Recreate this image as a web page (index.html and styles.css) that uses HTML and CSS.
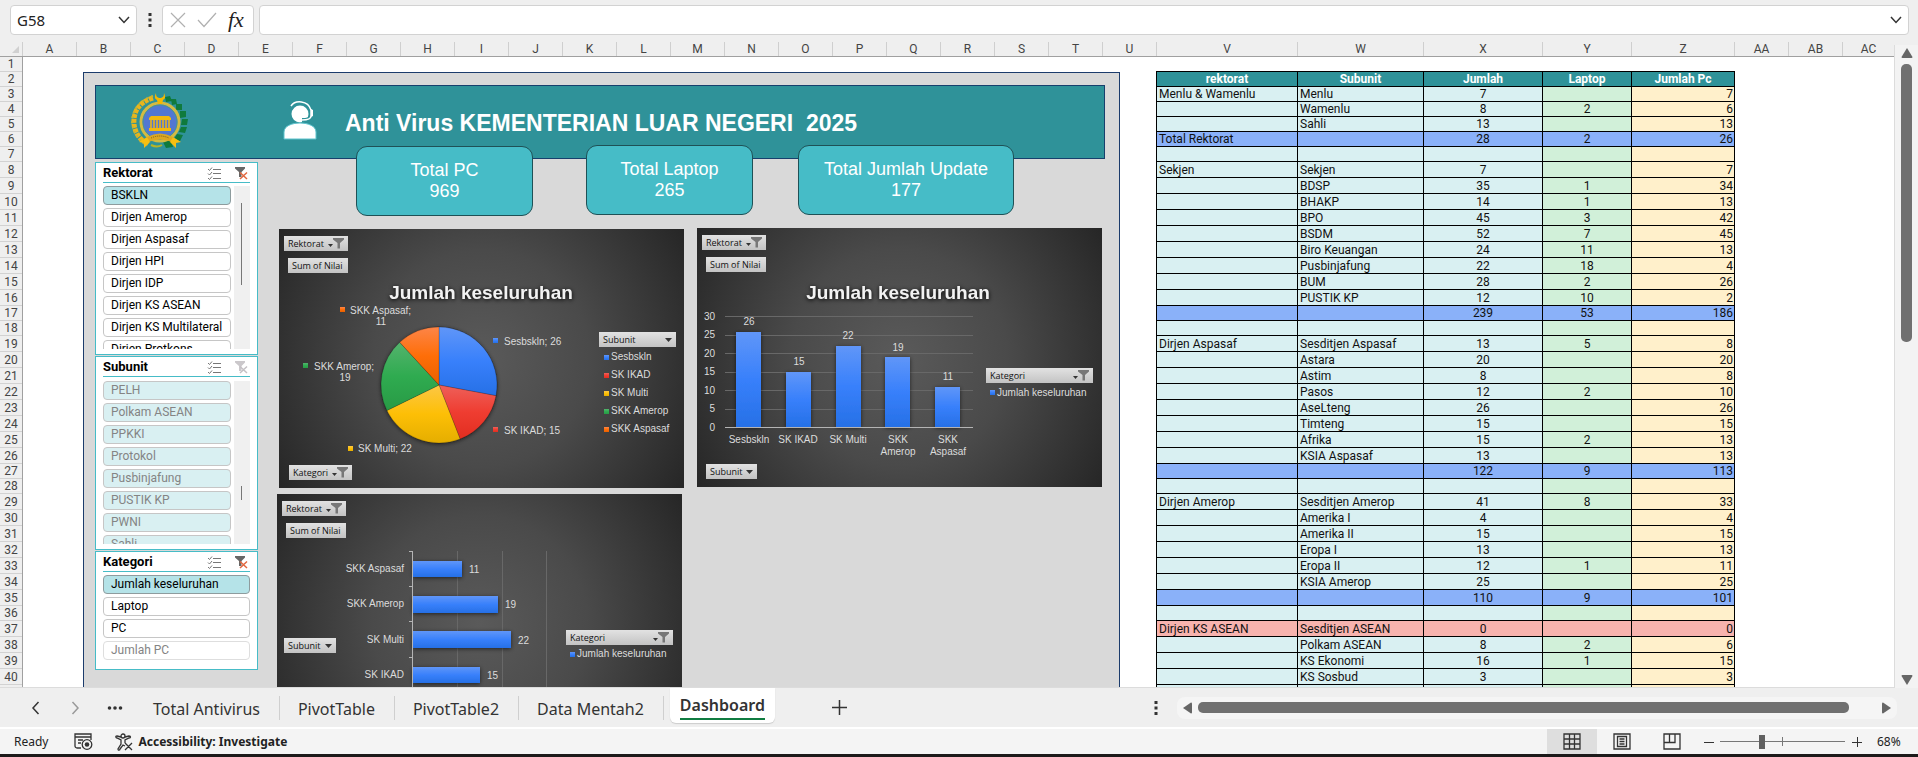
FILE: index.html
```
<!DOCTYPE html>
<html lang="id">
<head>
<meta charset="utf-8">
<title>Dashboard</title>
<link rel="stylesheet" href="styles.css">
</head>
<body>
<svg class="defs" width="0" height="0" aria-hidden="true">
  <defs>
    <linearGradient id="blue" x1="0" y1="0" x2="0" y2="1"><stop offset="0" stop-color="#6096f8"/><stop offset=".5" stop-color="#3880fb"/><stop offset="1" stop-color="#2670e6"/></linearGradient>
    <linearGradient id="red" x1="0" y1="0" x2="0" y2="1"><stop offset="0" stop-color="#ee605a"/><stop offset=".5" stop-color="#ef3d31"/><stop offset="1" stop-color="#e22e20"/></linearGradient>
    <linearGradient id="yellow" x1="0" y1="0" x2="0" y2="1"><stop offset="0" stop-color="#fcc746"/><stop offset=".5" stop-color="#fdbf06"/><stop offset="1" stop-color="#e5ae00"/></linearGradient>
    <linearGradient id="green" x1="0" y1="0" x2="0" y2="1"><stop offset="0" stop-color="#54b36d"/><stop offset=".5" stop-color="#2fab50"/><stop offset="1" stop-color="#289a45"/></linearGradient>
    <linearGradient id="orange" x1="0" y1="0" x2="0" y2="1"><stop offset="0" stop-color="#fd8548"/><stop offset=".5" stop-color="#fe6e08"/><stop offset="1" stop-color="#e86000"/></linearGradient>
    <filter id="shade" x="-20%" y="-20%" width="140%" height="140%"><feDropShadow dx="0" dy="1" stdDeviation="2" flood-color="#000" flood-opacity=".6"/></filter>
    <symbol id="funnel" viewBox="0 0 16 11"><path d="M0 6h5l-2.500 3z" fill="#333"/><path d="M5 0h11v1.500L12 5v5.500H9.500V5L5 1.500z" fill="#777"/></symbol>
    <symbol id="multi" viewBox="0 0 14 13"><path d="M1 2l1.500 1.500L5 .5M1 6.500L2.500 8 5 5M1 11l1.500 1.500L5 9.500" fill="none" stroke="#777"/><path d="M6 2.500h8M6 6.500h8M6 11.500h8" stroke="#777"/></symbol>
    <symbol id="clear" viewBox="0 0 14 13"><path d="M1 0h10v1.500L7.500 5v5H5V5L1 1.500z" fill="#666"/><path d="M6 5.500l7 6.500M13 5.500L6 12" stroke="#e2673f" stroke-width="1.500"/></symbol>
    <symbol id="clear-off" viewBox="0 0 14 13"><path d="M1 0h10v1.500L7.500 5v5H5V5L1 1.500z" fill="#cbc8cb"/><path d="M6 5.500l7 6.500M13 5.500L6 12" stroke="#c4c0c4" stroke-width="1.500"/></symbol>
  </defs>
</svg>

<header class="formula-bar">
  <div class="name-box">
    <input type="text" value="G58" aria-label="Name Box">
    <button type="button" aria-label="Open names"><svg width="12" height="8" viewBox="0 0 12 8"><path d="M1 1l5 5.500L11 1" fill="none" stroke="#333" stroke-width="1.500"/></svg></button>
  </div>
  <svg class="grip" width="4" height="14" viewBox="0 0 4 14"><path d="M.5 0h3v3h-3zM.5 5.500h3v3h-3zM.5 11h3v3h-3z" fill="#333"/></svg>
  <div class="fx-box">
    <button type="button" aria-label="Cancel"><svg width="16" height="16" viewBox="0 0 16 16"><path d="M1 1l14 14M15 1L1 15" stroke="#b0b0b0" stroke-width="1.200"/></svg></button>
    <button type="button" aria-label="Enter"><svg width="20" height="16" viewBox="0 0 20 16"><path d="M1 8l6 6.500L19 1" fill="none" stroke="#b0b0b0" stroke-width="1.200"/></svg></button>
    <button type="button" class="fx">fx</button>
  </div>
  <div class="formula">
    <input type="text" aria-label="Formula">
    <button type="button" aria-label="Expand formula bar"><svg width="12" height="8" viewBox="0 0 12 8"><path d="M1 1l5 5.500L11 1" fill="none" stroke="#333" stroke-width="1.500"/></svg></button>
  </div>
</header>

<main class="workbook">
  <section class="sheet">
    <div class="columns">
      <span class="corner"><svg width="7" height="7" viewBox="0 0 7 7"><path d="M7 0v7H0z" fill="#d0d0d0"/></svg></span>
      <span>A</span><span>B</span><span>C</span><span>D</span><span>E</span><span>F</span><span>G</span><span>H</span><span>I</span><span>J</span><span>K</span><span>L</span><span>M</span><span>N</span><span>O</span><span>P</span><span>Q</span><span>R</span><span>S</span><span>T</span><span>U</span>
      <span class="col-v">V</span><span class="col-w">W</span><span class="col-x">X</span><span class="col-y">Y</span><span class="col-z">Z</span><span>AA</span><span>AB</span><span class="last">AC</span>
    </div>
    <div class="grid">
      <div class="rows">
        <span class="s">1</span><span class="s">2</span><span class="s">3</span><span class="s">4</span><span class="s">5</span><span class="s">6</span><span class="s">7</span><span>8</span><span>9</span><span>10</span><span>11</span><span>12</span><span>13</span><span>14</span><span>15</span><span>16</span><span class="s">17</span><span class="s">18</span><span>19</span><span>20</span><span>21</span><span>22</span><span>23</span><span>24</span><span>25</span><span>26</span><span class="s">27</span><span class="s">28</span><span>29</span><span>30</span><span>31</span><span>32</span><span>33</span><span>34</span><span>35</span><span class="s">36</span><span>37</span><span>38</span><span>39</span><span>40</span><span></span>
      </div>
      <div class="canvas">
        <section class="dashboard">
          <div class="banner">
            <svg class="emblem" width="58" height="58" viewBox="0 0 58 58">
              <path d="M22 7C8 11 2 21 3 33c1 9 6 16 14 20" fill="none" stroke="#e9b51c" stroke-width="5" stroke-dasharray="4 1"/>
              <path d="M22 5C9 9 1 19 1 31c1 10 6 18 15 23" fill="none" stroke="#c3b536" stroke-width="2" stroke-dasharray="2 3"/>
              <g fill="#0f7a3c"><path d="M34 6l5-1 2 5-6 1zM40 8l5 0 1 5-5 1zM45 13l6 0 0 6-6 0zM49 20l6 0 0 6-6 1zM51 28l6 0-1 6-6 0zM50 36l6 0-2 6-6-1zM46 43l6 1-3 6-6-2zM32 51l8-2 2 7-7 1z"/></g>
              <circle cx="29" cy="31" r="19" fill="#5277d2" stroke="#d3bb42" stroke-width="3"/>
              <circle cx="29" cy="31" r="17" fill="none" stroke="#48998a"/>
              <path d="M18 27l2-2h18l2 2v2H18zM18 37h22v3H18z" fill="#f2b90f"/>
              <path d="M20 29v8M23 29v8M26 29v8M29 29v8M32 29v8M35 29v8M38 29v8" stroke="#f2b90f" stroke-width="1.500"/>
              <path d="M25 2c0 5 2 4 3 5h2c1-1 3 0 3-5 2 4 1 6-1 7l-1 4h-4l-1-4c-2-1-3-3-1-7z" fill="#f5b800"/>
              <path d="M16 46q13-7 26 0l-1 5q-12-5-24 0z" fill="#dca722"/><path d="M16 46l-8 5 5 1 0 5 6-6zM42 46l8 5-5 1 0 5-6-6z" fill="#f7bf11"/>
              <path d="M20 47q9-4 18 0" fill="none" stroke="#79601b" stroke-dasharray="1 1"/>
              <path d="M20 54q6 3 11 0" fill="none" stroke="#b7b527" stroke-width="2"/>
            </svg>
            <svg class="agent" width="34" height="40" viewBox="0 0 34 40">
              <circle cx="17" cy="13" r="8.500" fill="#fff"/>
              <path d="M1 38v-7c0-6 8-9 16-9s16 3 16 9v7z" fill="#fff" stroke="#5cc3cd"/>
              <path d="M8 8C10 0 25-2 28 9v6c0 3-4 4-9 4" fill="none" stroke="#2f9299" stroke-width="4"/>
              <path d="M8 5C12-1 25-1 28 9v6c0 3-4 4-9 4" fill="none" stroke="#fff" stroke-width="1.500"/><path d="M28 8l2 1v6l-2 1z" fill="#fff"/>
            </svg>
            <h1>Anti Virus KEMENTERIAN LUAR NEGERI &nbsp;2025</h1>
          </div>

          <div class="card card-pc"><span>Total PC</span><span>969</span></div>
          <div class="card card-laptop"><span>Total Laptop</span><span>265</span></div>
          <div class="card card-update"><span>Total Jumlah Update</span><span>177</span></div>

          <div class="slicers">
            <section class="slicer rektorat">
              <header><h2>Rektorat</h2><button type="button" aria-label="Multi-Select"><svg width="14" height="13"><use href="#multi"/></svg></button><button type="button" aria-label="Clear Filter"><svg width="14" height="13"><use href="#clear"/></svg></button></header>
              <div class="slicer-body">
                <div class="items"><button type="button" class="on">BSKLN</button><button type="button">Dirjen Amerop</button><button type="button">Dirjen Aspasaf</button><button type="button">Dirjen HPI</button><button type="button">Dirjen IDP</button><button type="button">Dirjen KS ASEAN</button><button type="button">Dirjen KS Multilateral</button><button type="button">Dirjen Protkons</button></div>
                <div class="track"><i></i></div>
              </div>
            </section>
            <section class="slicer subunit">
              <header><h2>Subunit</h2><button type="button" aria-label="Multi-Select"><svg width="14" height="13"><use href="#multi"/></svg></button><button type="button" aria-label="Clear Filter"><svg width="14" height="13"><use href="#clear-off"/></svg></button></header>
              <div class="slicer-body">
                <div class="items"><button type="button">PELH</button><button type="button">Polkam ASEAN</button><button type="button">PPKKI</button><button type="button">Protokol</button><button type="button">Pusbinjafung</button><button type="button">PUSTIK KP</button><button type="button">PWNI</button><button type="button">Sahli</button></div>
                <div class="track"><i></i></div>
              </div>
            </section>
            <section class="slicer kategori">
              <header><h2>Kategori</h2><button type="button" aria-label="Multi-Select"><svg width="14" height="13"><use href="#multi"/></svg></button><button type="button" aria-label="Clear Filter"><svg width="14" height="13"><use href="#clear"/></svg></button></header>
              <div class="slicer-body">
                <div class="items"><button type="button" class="on">Jumlah keseluruhan</button><button type="button">Laptop</button><button type="button">PC</button><button type="button" class="off">Jumlah PC</button></div>
              </div>
            </section>
          </div>

          <section class="chart pie">
            <svg width="405" height="259" viewBox="0 0 405 259">
              <text class="title" x="202" y="70">Jumlah keseluruhan</text>
              <g stroke="#00000040" stroke-width=".7">
                <circle cx="160" cy="156" r="58" fill="#444" filter="url(#shade)"/>
                <path d="M160 156V98A58 58 0 0 1 217 166.700z" fill="url(#blue)"/>
                <path d="M160 156L217 166.700A58 58 0 0 1 181.100 210z" fill="url(#red)"/>
                <path d="M160 156L181.100 210A58 58 0 0 1 107.900 181.500z" fill="url(#yellow)"/>
                <path d="M160 156L107.900 181.500A58 58 0 0 1 120.700 113.300z" fill="url(#green)"/>
                <path d="M160 156L120.700 113.300A58 58 0 0 1 160 98z" fill="url(#orange)"/>
              </g>
              <rect x="61" y="78" width="5" height="5" fill="url(#orange)"/><text x="71" y="85">SKK Aspasaf;</text><text class="mid" x="102" y="96">11</text>
              <rect x="214" y="109" width="5" height="5" fill="url(#blue)"/><text x="225" y="116">Sesbskln; 26</text>
              <rect x="214" y="198" width="5" height="5" fill="url(#red)"/><text x="225" y="205">SK IKAD; 15</text>
              <rect x="69" y="217" width="5" height="5" fill="url(#yellow)"/><text x="79" y="223">SK Multi; 22</text>
              <rect x="24" y="134" width="5" height="5" fill="url(#green)"/><text x="35" y="141">SKK Amerop;</text><text class="mid" x="66" y="152">19</text>
              <rect x="325" y="126" width="5" height="5" fill="url(#blue)"/><text x="332" y="131">Sesbskln</text>
              <rect x="325" y="144" width="5" height="5" fill="url(#red)"/><text x="332" y="149">SK IKAD</text>
              <rect x="325" y="162" width="5" height="5" fill="url(#yellow)"/><text x="332" y="167">SK Multi</text>
              <rect x="325" y="180" width="5" height="5" fill="url(#green)"/><text x="332" y="185">SKK Amerop</text>
              <rect x="325" y="198" width="5" height="5" fill="url(#orange)"/><text x="332" y="203">SKK Aspasaf</text>
            </svg>
            <button type="button" class="field rek">Rektorat<svg width="16" height="11"><use href="#funnel"/></svg></button>
            <button type="button" class="field sum">Sum of Nilai</button>
            <button type="button" class="field sub">Subunit<svg width="7" height="4"><path d="M0 0h7L3.500 4z" fill="#333"/></svg></button>
            <button type="button" class="field kat">Kategori<svg width="16" height="11"><use href="#funnel"/></svg></button>
          </section>

          <section class="chart column">
            <svg width="405" height="259" viewBox="0 0 405 259">
              <text class="title" x="201" y="71">Jumlah keseluruhan</text>
              <path class="lines" d="M28 88.500h248M28 107.500h248M28 125.500h248M28 144.500h248M28 162.500h248M28 181.500h248"/>
              <g fill="url(#blue)" filter="url(#shade)">
                <rect x="39" y="104" width="25" height="95"/><rect x="89" y="144" width="25" height="55"/><rect x="139" y="118" width="25" height="81"/><rect x="188" y="129" width="25" height="70"/><rect x="238" y="159" width="25" height="40"/>
              </g>
              <path class="axis" d="M28 199.500h248"/>
              <g class="end"><text x="18" y="92">30</text><text x="18" y="110">25</text><text x="18" y="129">20</text><text x="18" y="147">15</text><text x="18" y="166">10</text><text x="18" y="184">5</text><text x="18" y="203">0</text></g>
              <g class="mid"><text x="52" y="97">26</text><text x="102" y="137">15</text><text x="151" y="111">22</text><text x="201" y="123">19</text><text x="251" y="152">11</text>
              <text x="52" y="215">Sesbskln</text><text x="101" y="215">SK IKAD</text><text x="151" y="215">SK Multi</text><text x="201" y="215">SKK</text><text x="201" y="227">Amerop</text><text x="251" y="215">SKK</text><text x="251" y="227">Aspasaf</text></g>
              <rect x="293" y="162" width="5" height="5" fill="url(#blue)"/><text x="300" y="168">Jumlah keseluruhan</text>
            </svg>
            <button type="button" class="field rek">Rektorat<svg width="16" height="11"><use href="#funnel"/></svg></button>
            <button type="button" class="field sum">Sum of Nilai</button>
            <button type="button" class="field kat">Kategori<svg width="16" height="11"><use href="#funnel"/></svg></button>
            <button type="button" class="field sub">Subunit<svg width="7" height="4"><path d="M0 0h7L3.500 4z" fill="#333"/></svg></button>
          </section>

          <section class="chart bar">
            <svg width="405" height="259" viewBox="0 0 405 259">
              <path class="lines" d="M180.500 57v200M225.500 57v200M269.500 57v200"/>
              <g fill="url(#blue)" filter="url(#shade)">
                <rect x="136" y="67" width="49" height="16"/><rect x="136" y="102" width="85" height="17"/><rect x="136" y="137" width="98" height="17"/><rect x="136" y="173" width="67" height="16"/>
              </g>
              <path class="axis" d="M135.500 57v200M132 57.500h4M132 92.500h4M132 127.500h4M132 163.500h4"/>
              <g class="end"><text x="127" y="78">SKK Aspasaf</text><text x="127" y="113">SKK Amerop</text><text x="127" y="149">SK Multi</text><text x="127" y="184">SK IKAD</text></g>
              <text x="192" y="79">11</text><text x="228" y="114">19</text><text x="241" y="150">22</text><text x="210" y="185">15</text>
              <rect x="293" y="158" width="5" height="5" fill="url(#blue)"/><text x="300" y="163">Jumlah keseluruhan</text>
            </svg>
            <button type="button" class="field rek">Rektorat<svg width="16" height="11"><use href="#funnel"/></svg></button>
            <button type="button" class="field sum">Sum of Nilai</button>
            <button type="button" class="field sub">Subunit<svg width="7" height="4"><path d="M0 0h7L3.500 4z" fill="#333"/></svg></button>
            <button type="button" class="field kat">Kategori<svg width="16" height="11"><use href="#funnel"/></svg></button>
          </section>
        </section>

        <table class="data">
          <colgroup><col class="col-v"><col class="col-w"><col class="col-x"><col class="col-y"><col class="col-z"></colgroup>
          <thead><tr class="s"><th>rektorat</th><th>Subunit</th><th>Jumlah</th><th>Laptop</th><th>Jumlah Pc</th></tr></thead>
          <tbody>
            <tr class="s"><td>Menlu &amp; Wamenlu</td><td>Menlu</td><td>7</td><td></td><td>7</td></tr>
            <tr class="s"><td></td><td>Wamenlu</td><td>8</td><td>2</td><td>6</td></tr>
            <tr class="s"><td></td><td>Sahli</td><td>13</td><td></td><td>13</td></tr>
            <tr class="s total"><td>Total Rektorat</td><td></td><td>28</td><td>2</td><td>26</td></tr>
            <tr class="s"><td></td><td></td><td></td><td></td><td></td></tr>
            <tr><td>Sekjen</td><td>Sekjen</td><td>7</td><td></td><td>7</td></tr>
            <tr><td></td><td>BDSP</td><td>35</td><td>1</td><td>34</td></tr>
            <tr><td></td><td>BHAKP</td><td>14</td><td>1</td><td>13</td></tr>
            <tr><td></td><td>BPO</td><td>45</td><td>3</td><td>42</td></tr>
            <tr><td></td><td>BSDM</td><td>52</td><td>7</td><td>45</td></tr>
            <tr><td></td><td>Biro Keuangan</td><td>24</td><td>11</td><td>13</td></tr>
            <tr><td></td><td>Pusbinjafung</td><td>22</td><td>18</td><td>4</td></tr>
            <tr><td></td><td>BUM</td><td>28</td><td>2</td><td>26</td></tr>
            <tr><td></td><td>PUSTIK KP</td><td>12</td><td>10</td><td>2</td></tr>
            <tr class="s total"><td></td><td></td><td>239</td><td>53</td><td>186</td></tr>
            <tr class="s"><td></td><td></td><td></td><td></td><td></td></tr>
            <tr><td>Dirjen Aspasaf</td><td>Sesditjen Aspasaf</td><td>13</td><td>5</td><td>8</td></tr>
            <tr><td></td><td>Astara</td><td>20</td><td></td><td>20</td></tr>
            <tr><td></td><td>Astim</td><td>8</td><td></td><td>8</td></tr>
            <tr><td></td><td>Pasos</td><td>12</td><td>2</td><td>10</td></tr>
            <tr><td></td><td>AseLteng</td><td>26</td><td></td><td>26</td></tr>
            <tr><td></td><td>Timteng</td><td>15</td><td></td><td>15</td></tr>
            <tr><td></td><td>Afrika</td><td>15</td><td>2</td><td>13</td></tr>
            <tr><td></td><td>KSIA Aspasaf</td><td>13</td><td></td><td>13</td></tr>
            <tr class="s total"><td></td><td></td><td>122</td><td>9</td><td>113</td></tr>
            <tr class="s"><td></td><td></td><td></td><td></td><td></td></tr>
            <tr><td>Dirjen Amerop</td><td>Sesditjen Amerop</td><td>41</td><td>8</td><td>33</td></tr>
            <tr><td></td><td>Amerika I</td><td>4</td><td></td><td>4</td></tr>
            <tr><td></td><td>Amerika II</td><td>15</td><td></td><td>15</td></tr>
            <tr><td></td><td>Eropa I</td><td>13</td><td></td><td>13</td></tr>
            <tr><td></td><td>Eropa II</td><td>12</td><td>1</td><td>11</td></tr>
            <tr><td></td><td>KSIA Amerop</td><td>25</td><td></td><td>25</td></tr>
            <tr class="total"><td></td><td></td><td>110</td><td>9</td><td>101</td></tr>
            <tr class="s"><td></td><td></td><td></td><td></td><td></td></tr>
            <tr class="alert"><td>Dirjen KS ASEAN</td><td>Sesditjen ASEAN</td><td>0</td><td></td><td>0</td></tr>
            <tr><td></td><td>Polkam ASEAN</td><td>8</td><td>2</td><td>6</td></tr>
            <tr><td></td><td>KS Ekonomi</td><td>16</td><td>1</td><td>15</td></tr>
            <tr><td></td><td>KS Sosbud</td><td>3</td><td></td><td>3</td></tr>
            <tr><td></td><td></td><td></td><td></td><td></td></tr>
          </tbody>
        </table>
      </div>
    </div>
  </section>
  <div class="vscroll">
    <svg width="12" height="10" viewBox="0 0 12 10"><path d="M6 0l5.500 9a1 1 0 0 1-1 1h-9a1 1 0 0 1-1-1z" fill="#666"/></svg>
    <div class="vtrack"><i></i></div>
    <svg width="12" height="10" viewBox="0 0 12 10"><path d="M6 10L.5 1a1 1 0 0 1 1-1h9a1 1 0 0 1 1 1z" fill="#666"/></svg>
  </div>
</main>

<nav class="tabs">
  <button type="button" class="nav" aria-label="Previous sheet"><svg width="9" height="14" viewBox="0 0 9 14"><path d="M7.500 1L2 7l5.500 6" fill="none" stroke="#333" stroke-width="1.500"/></svg></button>
  <button type="button" class="nav" aria-label="Next sheet"><svg width="9" height="14" viewBox="0 0 9 14"><path d="M1.500 1L7 7l-5.500 6" fill="none" stroke="#999" stroke-width="1.500"/></svg></button>
  <button type="button" class="nav" aria-label="More sheets"><svg width="16" height="4" viewBox="0 0 16 4"><g fill="#333"><circle cx="2.500" cy="2" r="1.800"/><circle cx="8" cy="2" r="1.800"/><circle cx="13.500" cy="2" r="1.800"/></g></svg></button>
  <a href="#total">Total Antivirus</a><a href="#pivot">PivotTable</a><a href="#pivot2">PivotTable2</a><a href="#mentah">Data Mentah2</a><a href="#dashboard" class="current"><b>Dashboard</b></a>
  <button type="button" class="add" aria-label="New sheet"><svg width="15" height="15" viewBox="0 0 15 15"><path d="M7.500 0v15M0 7.500h15" stroke="#333" stroke-width="1.500"/></svg></button>
  <div class="hscroll">
    <svg class="grip" width="4" height="14" viewBox="0 0 4 14"><path d="M.5 0h3v3h-3zM.5 5.500h3v3h-3zM.5 11h3v3h-3z" fill="#333"/></svg>
    <div class="hbar">
      <svg width="9" height="12" viewBox="0 0 9 12"><path d="M0 6L8 .5a1 1 0 0 1 1 1v9a1 1 0 0 1-1 1z" fill="#666"/></svg>
      <div class="htrack"><i></i></div>
      <svg width="9" height="12" viewBox="0 0 9 12"><path d="M9 6L1 .5a1 1 0 0 0-1 1v9a1 1 0 0 0 1 1z" fill="#666"/></svg>
    </div>
  </div>
</nav>

<footer class="status">
  <span class="ready">Ready</span>
  <svg width="19" height="17" viewBox="0 0 19 17"><g fill="none" stroke="#333" stroke-width="1.300"><path d="M7 15H3a2 2 0 0 1-2-2V1h16v6M1 4h16M4 7h5M4 10h3"/><circle cx="13" cy="11.500" r="4.800"/></g><circle cx="13" cy="11.500" r="2.300" fill="#333"/></svg>
  <button type="button" class="access"><svg width="19" height="18" viewBox="0 0 19 18"><g fill="none" stroke="#333" stroke-width="1.300"><circle cx="8" cy="3" r="2"/><path d="M6 4L2 3C0 3 1 5 2 5l4 2v4l-3 5c0 2 2 1 2 0l3-4 2 1M10 4l4-1c2 0 2 2 0 2l-4 2v3M10 10l7 7M17 10l-7 7"/></g></svg>Accessibility: Investigate</button>
  <div class="views">
    <button type="button" class="view active" aria-label="Normal"><svg width="18" height="17" viewBox="0 0 18 17"><path d="M1 1h16v15H1zM1 6h16M1 11h16M6.500 1v15M11.500 1v15" fill="none" stroke="#333" stroke-width="1.300"/></svg></button>
    <button type="button" class="view" aria-label="Page Layout"><svg width="18" height="17" viewBox="0 0 18 17"><path d="M1 1h16v15H1zM4.500 3.500h9v10h-9zM6.500 6h5M6.500 8.500h5M6.500 11h5" fill="none" stroke="#333" stroke-width="1.300"/></svg></button>
    <button type="button" class="view" aria-label="Page Break Preview"><svg width="18" height="17" viewBox="0 0 18 17"><path d="M1 1h16v15H1zM1 9.500h11V1M6.500 1v8.500" fill="none" stroke="#333" stroke-width="1.300"/></svg></button>
  </div>
  <button type="button" class="zoom-step" aria-label="Zoom out"><svg width="10" height="10" viewBox="0 0 10 10"><path d="M0 5.500h10" stroke="#333"/></svg></button>
  <input class="zoom" type="range" min="0" max="100" value="33" aria-label="Zoom">
  <button type="button" class="zoom-step" aria-label="Zoom in"><svg width="10" height="10" viewBox="0 0 10 10"><path d="M0 5.500h10M5.500 0v10" stroke="#333"/></svg></button>
  <span class="percent">68%</span>
</footer>
</body>
</html>
```

FILE: styles.css
```
* { box-sizing: border-box; }
html, body { height: 100%; margin: 0; }
body {
  display: flex;
  flex-direction: column;
  overflow: hidden;
  background: #efefef;
  color: #222;
  font-family: "Noto Sans", "Open Sans", sans-serif;
  font-size: 12px;
}
button { margin: 0; padding: 0; border: 0; background: none; color: inherit; font: inherit; }
svg { display: block; flex: none; }
.defs { position: absolute; }

/* formula bar */
.formula-bar { display: flex; flex: none; align-items: center; height: 40px; padding: 5px 9px 5px 10px; }
.name-box, .fx-box, .formula { display: flex; align-items: center; height: 30px; background: #fff; border: 1px solid #d2d2d2; border-radius: 4px; }
.formula-bar input { flex: 1; min-width: 0; border: 0; background: none; color: #222; font: 15px "Noto Sans", sans-serif; }
.name-box { width: 127px; padding: 0 6px 0 4px; }
.formula-bar .grip { margin: 0 10px 0 11px; }
.fx-box { width: 92px; gap: 11px; padding: 0 7px; }
.fx { font: italic 22px/26px "Liberation Serif", serif; }
.formula { flex: 1; margin-left: 5px; padding: 0 6px; }

/* worksheet */
.workbook { display: flex; flex: 1; min-height: 0; }
.sheet { display: flex; flex: 1; flex-direction: column; min-width: 0; }
.columns { display: flex; flex: none; height: 17px; padding-top: 2px; overflow: hidden; border-bottom: 1px solid #a0a0a0; color: #444; font: 12px/14px Roboto, sans-serif; text-align: center; }
.columns span { flex: none; width: 54px; border-right: 1px solid #cfcfcf; }
.columns .corner { display: flex; align-items: flex-end; justify-content: flex-end; width: 23px; padding: 0 3px 3px 0; }
.columns .last { flex: 1; width: auto; border-right: 0; }
.columns .col-v, .col-v { width: 141px; }
.columns .col-w, .col-w { width: 126px; }
.columns .col-x, .col-x { width: 119px; }
.columns .col-y, .col-y { width: 89px; }
.columns .col-z, .col-z { width: 103px; }
.grid { display: flex; flex: 1; min-height: 0; overflow: hidden; border-bottom: 1px solid #dcdcdc; }
.rows { flex: none; width: 23px; border-right: 1px solid #a0a0a0; color: #444; font: 12px/14px Roboto, sans-serif; text-align: center; }
.rows span { display: block; height: 16px; padding-top: 1px; border-bottom: 1px solid #d2d2d2; }
.rows .s { height: 15px; padding-top: 0; }
.canvas { display: flex; flex: 1; min-width: 0; overflow: hidden; background: #fff; padding-left: 60px; }

/* dashboard */
.dashboard { position: relative; flex: none; width: 1037px; margin: 15px 36px 0 0; padding: 12px 14px 0 11px; border: 1px solid #1c3c6c; border-bottom: 0; background: #d9d9d9; }
.banner { display: flex; align-items: flex-start; height: 74px; padding: 5px 0 0 35px; border: 1px solid #17406d; background: #2f9299; color: #fff; }
.agent { margin: 10px 28px 0 94px; }
.banner h1 { margin: 18px 0 0; font: bold 23px/28px "Liberation Sans", sans-serif; white-space: nowrap; }
.card { position: absolute; display: flex; flex-direction: column; justify-content: center; height: 70px; border: 1px solid #1f5156; border-radius: 11px; background: #46bcc7; color: #fff; font: 18px/21px "Liberation Sans", sans-serif; text-align: center; }
.card-pc { left: 272px; top: 73px; width: 177px; }
.card-laptop { left: 502px; top: 72px; width: 167px; }
.card-update { left: 714px; top: 72px; width: 216px; }

/* slicers */
.slicers { display: flex; flex-direction: column; gap: 1px; width: 163px; margin-top: 3px; font-family: Roboto, sans-serif; }
.slicer { padding: 1px 7px 5px; border: 1px solid #46bcc7; background: #fff; color: #000; }
.slicer header { display: flex; align-items: center; height: 19px; border-bottom: 1px solid #46bcc7; gap: 13px; padding-right: 2px; }
.slicer h2 { flex: 1; margin: 0; font: bold 13px/16px Roboto, sans-serif; }
.slicer-body { display: flex; justify-content: space-between; padding-top: 3px; }
.items { display: flex; flex: 1; flex-direction: column; gap: 3px; overflow: hidden; }
.rektorat .slicer-body { height: 166px; }
.items button { flex: none; height: 19px; padding-left: 7px; border: 1px solid #c6c6c6; border-radius: 4px; background: #fff; font-size: 12px; line-height: 17px; text-align: left; }
.items .on { border-color: #8e9c9e; background: #b5e3e8; }
.items .off { border-color: #dedede; color: #848484; }
.subunit .items button { background: #d9f0f2; color: #848484; }
.subunit .slicer-body { height: 167px; padding-top: 4px; }
.kategori .slicer-body { height: 92px; }
.track { width: 16px; margin-left: 3px; padding: 17px 0 0 7px; background: #f0f0f0; }
.track i { display: block; width: 1px; height: 82px; background: #777; }
.subunit .track { padding-top: 105px; }
.subunit .track i { height: 14px; }

/* charts */
.chart { position: absolute; width: 405px; height: 259px; background: radial-gradient(circle at 50% 50%, #5a5a5a 0, #4a4a4a 45%, #262626 100%); }
.pie { left: 195px; top: 156px; }
.column { left: 613px; top: 155px; }
.bar { left: 193px; top: 421px; }
.chart text { fill: #dcdcdc; font: 10px "Liberation Sans", sans-serif; }
.chart .title { fill: #f2f2f2; font: bold 19px "Liberation Sans", sans-serif; text-anchor: middle; filter: drop-shadow(0 1px 2px #000); }
.mid { text-anchor: middle; }
.end { text-anchor: end; }
.lines { fill: none; stroke: #686868; }
.axis { fill: none; stroke: #b4b4b4; }
.field { position: absolute; display: flex; align-items: center; justify-content: space-between; height: 15px; padding: 0 4px; background: linear-gradient(#e2e2e2, #c3c3c3); color: #111; font: 9px/15px "Open Sans", sans-serif; white-space: nowrap; }
.rek { left: 5px; top: 7px; width: 64px; }
.sum { left: 9px; top: 29px; width: 60px; }
.pie .sub { left: 320px; top: 103px; width: 77px; }
.pie .kat { left: 10px; top: 236px; width: 63px; }
.column .kat { left: 289px; top: 140px; width: 107px; }
.column .sub { left: 9px; top: 236px; width: 51px; }
.bar .sub { left: 7px; top: 144px; width: 52px; }
.bar .kat { left: 289px; top: 136px; width: 107px; }

/* data table */
.data { flex: none; align-self: flex-start; width: 579px; margin-top: 14px; border-collapse: collapse; table-layout: fixed; color: #111; font: 12px/14px Roboto, sans-serif; }
.data tr { height: 16px; }
.data .s { height: 15px; }
.data th, .data td { padding: 0 2px; border: 1px solid #000; overflow: hidden; white-space: nowrap; }
.data th { background: #2f9299; color: #fff; }
.data td { background: #d9f0f2; }
.data td:nth-child(3) { text-align: center; }
.data td:nth-child(4) { background: #d1f0d9; text-align: center; }
.data td:nth-child(5) { background: #fff0cb; text-align: right; padding-right: 1px; }
.data .total td:nth-child(n) { background: #8ab1f9; }
.data .alert td:nth-child(n) { background: #f7b3ae; }

/* scroll bars */
.vscroll { display: flex; flex: none; flex-direction: column; align-items: center; width: 24px; margin-top: 5px; padding: 3px 0; border-left: 1px solid #dcdcdc; background: #f3f3f3; }
.vtrack { flex: 1; padding: 6px 0; }
.vtrack i { display: block; width: 11px; height: 46%; border-radius: 5px; background: #707070; }
.hscroll { display: flex; flex: none; align-items: center; width: 39.5%; margin-left: auto; gap: 19px; }
.hbar { display: flex; flex: 1; align-items: center; height: 22px; padding: 0 6px; border-radius: 8px; background: #f5f5f5; }
.htrack { flex: 1; padding: 0 6px; }
.htrack i { display: block; width: 96%; height: 11px; border-radius: 5px; background: #707070; }

/* sheet tabs */
.tabs { display: flex; flex: none; align-items: center; height: 41px; padding: 0 21px 0 15px; border-bottom: 2px solid #fff; }
.nav { display: flex; justify-content: center; width: 40px; }
.tabs a { display: flex; align-items: center; height: 24px; padding: 2px 19px 0 18px; border-right: 1px solid #cfcfcf; color: #333; font-size: 16px; line-height: 22px; text-decoration: none; white-space: nowrap; }
.tabs .current { align-self: flex-start; height: 35px; margin-left: 6px; padding: 0 10px; border: 0; border-radius: 0 0 6px 6px; background: #fff; box-shadow: 0 1px 1px #ccc; }
.current b { border-bottom: 2px solid #107c41; font-weight: 600; line-height: 26px; }
.add { margin-left: 57px; }

/* status bar */
.status { display: flex; flex: none; align-items: center; height: 28px; padding: 0 15px 0 14px; border-bottom: 3px solid #1c1a1a; background: #f4f4f4; font-size: 12px; line-height: 24px; }
.ready { margin-right: 26px; }
.access { display: flex; align-items: center; gap: 4px; margin-left: 22px; font-weight: 700; }
.views { display: flex; align-self: stretch; margin-left: auto; }
.view { display: flex; align-items: center; justify-content: center; width: 50px; }
.view.active { background: #dedede; }
.zoom-step { margin-left: 7px; }
.zoom { width: 125px; height: 16px; margin: 0 0 0 6px; appearance: none; background: linear-gradient(#777, #777) center / 100% 1px no-repeat, linear-gradient(#777, #777) center / 1px 9px no-repeat; }
.zoom::-webkit-slider-thumb { appearance: none; width: 6px; height: 14px; background: #606060; }
.percent { width: 26px; margin-left: 15px; }
```
